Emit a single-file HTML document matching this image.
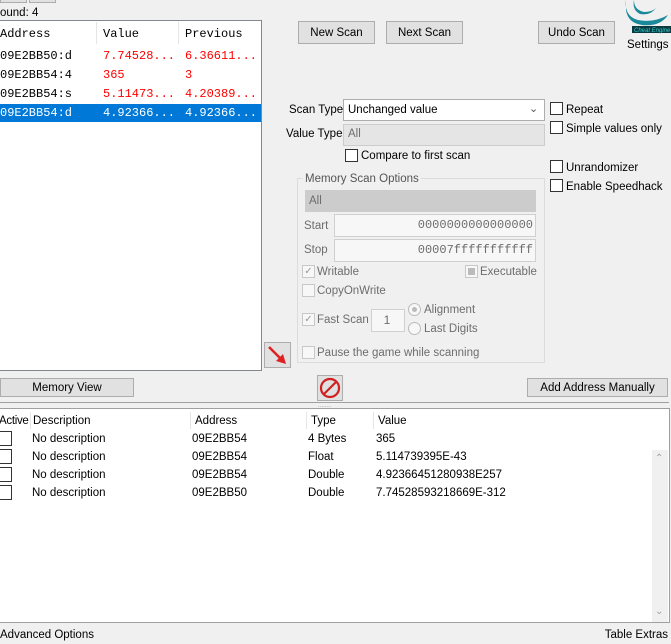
<!DOCTYPE html>
<html><head><style>
*{box-sizing:border-box;margin:0;padding:0}
body{width:671px;height:644px;background:#f0f0f0;font-family:"Liberation Sans",sans-serif;font-size:11.5px;line-height:16px;color:#000;position:relative;overflow:hidden}
.a{position:absolute;white-space:nowrap}
.btn{position:absolute;background:#e1e1e1;border:1px solid #adadad;text-align:center;font-size:11.5px}
.cb{position:absolute;width:13px;height:13px;border:1px solid #333;background:#fff}
.cbd{position:absolute;width:13px;height:13px;border:1px solid #c8c8c8;background:#f7f7f7}
.mono{font-family:"Liberation Mono",monospace;font-size:12px;line-height:normal}
.sel{position:absolute;border:1px solid #adadad;background:#e5e5e5}
.fld{position:absolute;border:1px solid #d0d0d0;background:#f7f7f7;color:#6d6d6d;text-align:right;padding-right:2px;font-family:"Liberation Mono",monospace;font-size:12px}
.g{color:#6d6d6d}
</style></head><body>
<div class="btn" style="left:0;top:-6px;width:27px;height:9px"></div>
<div class="btn" style="left:29px;top:-6px;width:27px;height:9px"></div>
<div class="a" style="left:0;top:5px">ound: 4</div>

<div class="a" style="left:0;top:20px;width:262px;height:351px;background:#fff;border:1px solid #828790;border-left:none"></div>
<div class="a" style="left:0;top:21px;width:260px;height:24px;background:#fff"></div>
<div class="a" style="left:96px;top:22px;width:1px;height:22px;background:#e5e5e5"></div>
<div class="a" style="left:178px;top:22px;width:1px;height:22px;background:#e5e5e5"></div>
<div class="a mono" style="left:0;top:27px">Address</div>
<div class="a mono" style="left:103px;top:27px">Value</div>
<div class="a mono" style="left:185px;top:27px">Previous</div>
<div class="a mono" style="left:0;top:49px">09E2BB50:d</div>
<div class="a mono" style="left:103px;top:49px;color:#f00">7.74528...</div>
<div class="a mono" style="left:185px;top:49px;color:#f00">6.36611...</div>
<div class="a mono" style="left:0;top:68px">09E2BB54:4</div>
<div class="a mono" style="left:103px;top:68px;color:#f00">365</div>
<div class="a mono" style="left:185px;top:68px;color:#f00">3</div>
<div class="a mono" style="left:0;top:87px">09E2BB54:s</div>
<div class="a mono" style="left:103px;top:87px;color:#f00">5.11473...</div>
<div class="a mono" style="left:185px;top:87px;color:#f00">4.20389...</div>
<div class="a" style="left:0;top:104px;width:261px;height:18px;background:#0078d7"></div>
<div class="a mono" style="left:0;top:106px;color:#fff">09E2BB54:d</div>
<div class="a mono" style="left:103px;top:106px;color:#fff">4.92366...</div>
<div class="a mono" style="left:185px;top:106px;color:#fff">4.92366...</div>

<div class="btn" style="left:298px;top:21px;width:77px;height:23px;line-height:22px">New Scan</div>
<div class="btn" style="left:386px;top:21px;width:77px;height:23px;line-height:22px">Next Scan</div>
<div class="btn" style="left:538px;top:21px;width:77px;height:23px;line-height:22px">Undo Scan</div>
<svg class="a" style="left:622px;top:0" width="49" height="34"><path d="M4 0 Q2 16 16 20 Q32 23 46 15 Q38 27 20 25 Q6 23 4 10Z M12 0 Q12 10 22 12 Q30 12 34 8 Q28 16 18 14 Q10 10 12 0Z" fill="#1a8a9a"/><rect x="10" y="26" width="39" height="7" fill="#0a3a40"/><text x="12" y="32" font-size="6" fill="#3cc" font-style="italic" font-family="Liberation Sans">Cheat Engine</text></svg>
<div class="a" style="left:627px;top:37px">Settings</div>

<div class="a" style="left:289px;top:102px">Scan Type</div>
<div class="sel" style="left:343px;top:99px;width:202px;height:22px;background:#fff"></div>
<div class="a" style="left:348px;top:102px">Unchanged value</div>
<div class="a" style="left:529px;top:101px;font-size:11px;color:#555">&#8964;</div>
<div class="a" style="left:286px;top:126px">Value Type</div>
<div class="sel" style="left:343px;top:124px;width:202px;height:22px;border-color:#ccc"></div>
<div class="a g" style="left:348px;top:126px">All</div>
<div class="cb" style="left:345px;top:149px"></div>
<div class="a" style="left:361px;top:148px">Compare to first scan</div>

<div class="cb" style="left:550px;top:102px"></div><div class="a" style="left:566px;top:102px">Repeat</div>
<div class="cb" style="left:550px;top:121px"></div><div class="a" style="left:566px;top:121px">Simple values only</div>
<div class="cb" style="left:550px;top:160px"></div><div class="a" style="left:566px;top:160px">Unrandomizer</div>
<div class="cb" style="left:550px;top:179px"></div><div class="a" style="left:566px;top:179px">Enable Speedhack</div>

<div class="a" style="left:297px;top:178px;width:248px;height:185px;border:1px solid #dcdcdc"></div>
<div class="a" style="left:303px;top:171px;background:#f0f0f0;padding:0 2px;color:#555">Memory Scan Options</div>
<div class="sel" style="left:305px;top:190px;width:231px;height:22px;background:#ccc;border-color:#ccc"></div>
<div class="a g" style="left:309px;top:193px">All</div>
<div class="a g" style="left:304px;top:218px">Start</div>
<div class="fld" style="left:334px;top:214px;width:202px;height:23px;line-height:21px">0000000000000000</div>
<div class="a g" style="left:304px;top:242px">Stop</div>
<div class="fld" style="left:334px;top:239px;width:202px;height:23px;line-height:21px">00007fffffffffff</div>
<div class="cbd" style="left:302px;top:265px;color:#999;font-size:10px;line-height:11px;text-align:center">&#10003;</div>
<div class="a g" style="left:317px;top:264px">Writable</div>
<div class="cbd" style="left:465px;top:265px"><div style="margin:2px;width:7px;height:7px;background:#bbb"></div></div>
<div class="a g" style="left:480px;top:264px">Executable</div>
<div class="cbd" style="left:302px;top:284px"></div>
<div class="a g" style="left:317px;top:283px">CopyOnWrite</div>
<div class="cbd" style="left:302px;top:313px;color:#999;font-size:10px;line-height:11px;text-align:center">&#10003;</div>
<div class="a g" style="left:317px;top:312px">Fast Scan</div>
<div class="fld" style="left:371px;top:309px;width:34px;height:23px;text-align:center;line-height:21px;font-family:'Liberation Sans'">1</div>
<div class="a" style="left:408px;top:303px;width:13px;height:13px;border-radius:50%;border:1px solid #bbb;background:#f7f7f7"><div style="margin:3px;width:5px;height:5px;border-radius:50%;background:#bbb"></div></div>
<div class="a g" style="left:424px;top:302px">Alignment</div>
<div class="a" style="left:408px;top:322px;width:13px;height:13px;border-radius:50%;border:1px solid #bbb;background:#f7f7f7"></div>
<div class="a g" style="left:424px;top:321px">Last Digits</div>
<div class="cbd" style="left:302px;top:346px"></div>
<div class="a g" style="left:317px;top:345px">Pause the game while scanning</div>

<div class="btn" style="left:264px;top:342px;width:27px;height:26px"><svg width="25" height="24"><path d="M4 4 L19 19" stroke="#e02020" stroke-width="2.5"/><path d="M21 21 L11 18 L18 11Z" fill="#e02020"/></svg></div>

<div class="btn" style="left:0;top:378px;width:134px;height:19px;line-height:18px">Memory View</div>
<div class="btn" style="left:317px;top:375px;width:26px;height:26px"><svg width="24" height="24"><circle cx="12" cy="12" r="9" fill="none" stroke="#d02020" stroke-width="2.2"/><path d="M6 18 L18 6" stroke="#d02020" stroke-width="2.2"/></svg></div>
<div class="btn" style="left:527px;top:378px;width:141px;height:19px;line-height:18px">Add Address Manually</div>
<div class="a" style="left:0;top:402px;width:669px;height:1px;background:#a0a0a0"></div>
<div class="a" style="left:318px;top:403px;font-size:6px;line-height:6px;color:#999">........</div>

<div class="a" style="left:0;top:408px;width:670px;height:215px;background:#fff;border:1px solid #a0a0a0;border-left:none"></div>
<div class="a" style="left:-1px;top:413px;letter-spacing:-0.3px">Active</div>
<div class="a" style="left:30px;top:412px;width:1px;height:17px;background:#e5e5e5"></div>
<div class="a" style="left:33px;top:413px">Description</div>
<div class="a" style="left:190px;top:412px;width:1px;height:17px;background:#e5e5e5"></div>
<div class="a" style="left:195px;top:413px">Address</div>
<div class="a" style="left:306px;top:412px;width:1px;height:17px;background:#e5e5e5"></div>
<div class="a" style="left:311px;top:413px">Type</div>
<div class="a" style="left:373px;top:412px;width:1px;height:17px;background:#e5e5e5"></div>
<div class="a" style="left:378px;top:413px">Value</div>

<div class="a" style="left:0;top:431px;width:12px;height:15px;border:1px solid #333;border-left:none"></div>
<div class="a" style="left:32px;top:431px">No description</div><div class="a" style="left:192px;top:431px">09E2BB54</div><div class="a" style="left:308px;top:431px">4 Bytes</div><div class="a" style="left:376px;top:431px">365</div>
<div class="a" style="left:0;top:449px;width:12px;height:15px;border:1px solid #333;border-left:none"></div>
<div class="a" style="left:32px;top:449px">No description</div><div class="a" style="left:192px;top:449px">09E2BB54</div><div class="a" style="left:308px;top:449px">Float</div><div class="a" style="left:376px;top:449px">5.114739395E-43</div>
<div class="a" style="left:0;top:467px;width:12px;height:15px;border:1px solid #333;border-left:none"></div>
<div class="a" style="left:32px;top:467px">No description</div><div class="a" style="left:192px;top:467px">09E2BB54</div><div class="a" style="left:308px;top:467px">Double</div><div class="a" style="left:376px;top:467px">4.92366451280938E257</div>
<div class="a" style="left:0;top:485px;width:12px;height:15px;border:1px solid #333;border-left:none"></div>
<div class="a" style="left:32px;top:485px">No description</div><div class="a" style="left:192px;top:485px">09E2BB50</div><div class="a" style="left:308px;top:485px">Double</div><div class="a" style="left:376px;top:485px">7.74528593218669E-312</div>

<div class="a" style="left:652px;top:450px;width:16px;height:172px;background:#f0f0f0"></div>
<div class="a" style="left:655px;top:451px;font-size:10px;color:#a0a0a0">&#8963;</div>
<div class="a" style="left:655px;top:604px;font-size:10px;color:#a0a0a0">&#8964;</div>

<div class="a" style="left:0;top:627px">Advanced Options</div>
<div class="a" style="right:3px;top:627px">Table Extras</div>
</body></html>
